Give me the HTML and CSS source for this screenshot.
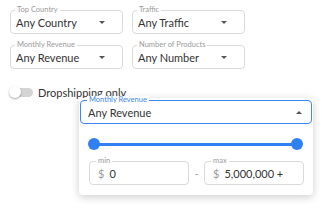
FILE: index.html
```html
<!DOCTYPE html>
<html lang="en">
<head>
    <meta charset="UTF-8">
    <title>Store filters</title>
    <link rel="stylesheet" href="styles.css">
</head>
<body>
    <div class="filters">
        <div class="filter-grid">
            <div class="field">
                <span class="field-label">Top Country</span>
                <span class="field-value">Any Country</span>
                <span class="caret"></span>
            </div>
            <div class="field">
                <span class="field-label">Traffic</span>
                <span class="field-value">Any Traffic</span>
                <span class="caret"></span>
            </div>
            <div class="field">
                <span class="field-label">Monthly Revenue</span>
                <span class="field-value">Any Revenue</span>
                <span class="caret"></span>
            </div>
            <div class="field">
                <span class="field-label">Number of Products</span>
                <span class="field-value">Any Number</span>
                <span class="caret"></span>
            </div>
        </div>

        <div class="toggle-row">
            <span class="toggle"><span class="toggle-thumb"></span></span>
            <span class="toggle-text">Dropshipping only</span>
        </div>

        <!-- open dropdown of Monthly Revenue -->
        <div class="popup">
            <div class="field field-active">
                <span class="field-label">Monthly Revenue</span>
                <span class="field-value">Any Revenue</span>
                <span class="caret caret-up"></span>
            </div>
            <div class="slider">
                <span class="slider-thumb"></span>
                <span class="slider-track"></span>
                <span class="slider-thumb"></span>
            </div>
            <div class="range-row">
                <div class="field range-field">
                    <span class="field-label">min</span>
                    <span class="dollar">$</span>
                    <span class="field-value">0</span>
                </div>
                <span class="dash">-</span>
                <div class="field range-field">
                    <span class="field-label">max</span>
                    <span class="dollar">$</span>
                    <span class="field-value">5,000,000 +</span>
                </div>
            </div>
        </div>
    </div>
</body>
</html>
```

FILE: styles.css
```css
html, body {
    height: 100%;
}
body {
    margin: 0;
    background: #fff;
    font-family: "Lato", "Noto Sans", sans-serif;
    color: #333;
}

.filters {
    position: relative;
    box-sizing: border-box;
    min-height: 220px;
    padding: 10px 0 0 10px;
}

.filter-grid {
    display: grid;
    grid-template-columns: 113px 113px;
    column-gap: 9px;
    row-gap: 11px;
}

/* outlined select box */
.field {
    position: relative;
    box-sizing: border-box;
    height: 24px;
    border: 1px solid #dadada;
    border-radius: 4px;
    display: flex;
    align-items: center;
    padding: 1px 18px 0 5px;
}
.field-label {
    position: absolute;
    top: -5px;
    left: 4px;
    padding: 0 2px;
    background: #fff;
    font-size: 7.5px;
    line-height: 8px;
    color: #9a9a9a;
}
.field-value {
    flex: 1;
    font-size: 11px;
    color: #333;
    white-space: nowrap;
}
.caret {
    position: absolute;
    right: 17px;
    top: 10px;
    border-left: 3px solid transparent;
    border-right: 3px solid transparent;
    border-top: 3px solid #555;
}
.caret-up {
    right: 9px;
    border-top: none;
    border-bottom: 3px solid #555;
}

.toggle-row {
    display: flex;
    align-items: center;
    gap: 5px;
    margin-top: 16px;
    height: 14px;
}
.toggle {
    position: relative;
    width: 23px;
    height: 9px;
    border-radius: 5px;
    background: #d4d4d4;
}
.toggle-thumb {
    position: absolute;
    left: -1px;
    top: -2px;
    width: 12px;
    height: 12px;
    border-radius: 50%;
    background: #fff;
    box-shadow: 0 1px 2px rgba(0, 0, 0, 0.35);
}
.toggle-text {
    font-size: 11px;
    color: #333;
}

.popup {
    position: absolute;
    left: 79px;
    top: 98px;
    width: 234px;
    height: 97px;
    box-sizing: border-box;
    padding: 2px 1px 0 1px;
    background: #fff;
    border-radius: 4px;
    box-shadow: 0 2px 8px rgba(0, 0, 0, 0.2);
}
.field-active {
    border-color: #3d86f5;
    padding-left: 7px;
}
.field-active .field-label {
    color: #3d86f5;
    left: 6px;
}

.slider {
    display: flex;
    align-items: center;
    margin: 14px 9px 0 8px;
    height: 12px;
}
.slider-track {
    flex: 1;
    height: 3px;
    margin: 0 -2px;
    background: #2f80f3;
}
.slider-thumb {
    width: 12px;
    height: 12px;
    border-radius: 50%;
    background: #2f80f3;
    position: relative;
    z-index: 1;
}

.range-row {
    display: flex;
    align-items: center;
    margin: 11px 0 0 9px;
}
.range-field {
    width: 100px;
    padding-left: 8px;
}
.range-field .field-label {
    left: 6px;
}
.dollar {
    font-size: 11px;
    color: #9a9a9a;
    margin-right: 5px;
}
.dash {
    width: 15px;
    text-align: center;
    font-size: 10px;
    color: #888;
}
```
